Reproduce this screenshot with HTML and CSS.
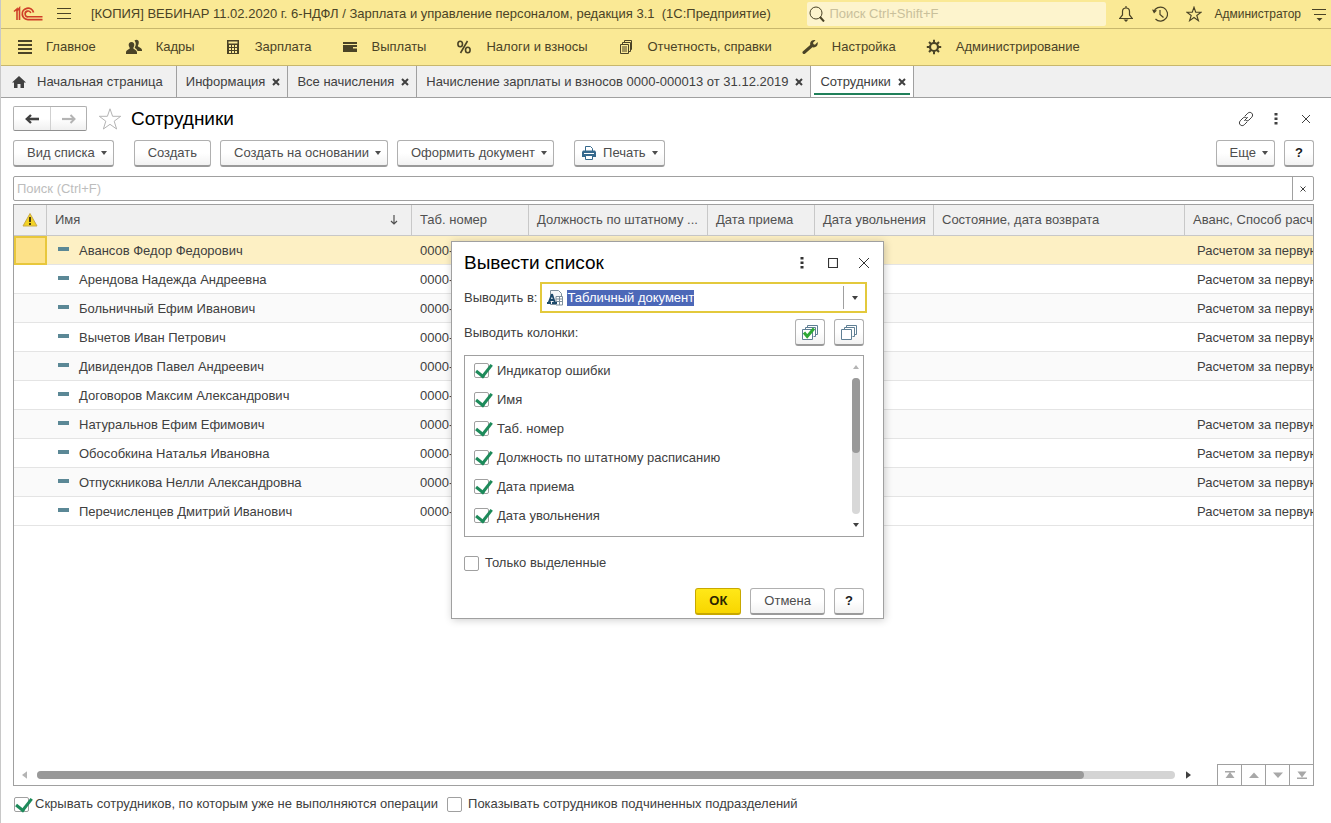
FILE: index.html
```html
<!DOCTYPE html>
<html lang="ru">
<head>
<meta charset="utf-8">
<title>Сотрудники</title>
<link rel="stylesheet" href="styles.css">
</head>
<body>
<svg class="defs" aria-hidden="true">
  <symbol id="close" viewBox="0 0 8 8"><path d="M1 1l6 6M7 1L1 7" fill="none" stroke="currentColor" stroke-width="2"/></symbol>
  <symbol id="caret" viewBox="0 0 6 4"><path d="M0 0h6L3 4z" fill="currentColor"/></symbol>
  <symbol id="dots" viewBox="0 0 4 12"><path d="M.5 0h3v2.500h-3zM.5 4.500h3v2.500h-3zM.5 9h3v2.500h-3z" fill="currentColor"/></symbol>
  <symbol id="star" viewBox="0 0 24 24"><path d="M12 1.800l2.600 7.500h8.100l-6.500 4.900 2.400 7.800L12 17.300 5.400 22l2.400-7.800L1.300 9.300h8.100z" fill="none" stroke="currentColor" stroke-linejoin="miter"/></symbol>
</svg>
<div class="app">
  <header class="titlebar">
    <svg class="logo" viewBox="0 0 30 16" fill="none" stroke="#cf3f28"><path d="M1 5.500L4 3v11M3.500 5.500L6.500 2v12" stroke-width="1.600"/><path d="M20.500 6.500A5.700 5.700 0 1 0 15.500 13.600H29.500" stroke-width="1.800"/><path d="M17.800 7A2.900 2.900 0 1 0 15.500 10.800H29.500" stroke-width="1.600"/></svg>
    <button class="plain" aria-label="Меню"><svg class="burger" viewBox="0 0 14 12"><path d="M0 .5h14M0 5.500h14M0 10.500h14" stroke="currentColor" stroke-width="1"/></svg></button>
    <h1 class="app-title">[КОПИЯ] ВЕБИНАР 11.02.2020 г. 6-НДФЛ / Зарплата и управление персоналом, редакция 3.1&nbsp; (1С:Предприятие)</h1>
    <label class="global-search">
      <svg viewBox="0 0 16 16" fill="none" stroke="currentColor"><circle cx="7" cy="7" r="6"/><path d="M11 11l4 4.500" stroke-width="2"/></svg>
      <input type="text" placeholder="Поиск Ctrl+Shift+F" aria-label="Поиск">
    </label>
    <div class="title-tools">
      <button class="plain" aria-label="Уведомления"><svg class="ic16" viewBox="0 0 16 16" fill="none" stroke="currentColor" stroke-width="1.200"><path d="M8 0v1.500M1 12.500h14M1.800 12.300L4.500 9V5.500a3.500 3.500 0 0 1 7 0V9l2.700 3.300"/><path d="M5.500 13.500h5L8 16z" fill="currentColor" stroke="none"/></svg></button>
      <button class="plain" aria-label="История"><svg class="ic16" viewBox="0 0 16 16" fill="none" stroke="currentColor"><path d="M1.800 6A7 7 0 1 1 3.500 13M8 4v4.500l3.500 3" stroke-width="1.200"/><path d="M0 3.500l5 1-3 3z" fill="currentColor" stroke="none"/></svg></button>
      <button class="plain" aria-label="Избранное"><svg class="ic16" viewBox="0 0 24 24" stroke-width="1.700"><use href="#star"/></svg></button>
      <a class="user" href="#">Администратор</a>
      <button class="plain" aria-label="Сервис"><svg class="ic16" viewBox="0 0 16 16"><path d="M1 3.500h14M3 8.500h12" stroke="currentColor"/><path d="M5.500 12h6l-3 3z" fill="currentColor"/></svg></button>
    </div>
  </header>

  <nav class="sections">
    <a href="#"><svg class="ic16" viewBox="0 0 16 16"><path d="M2 2h14M2 6h14M2 10h14M2 14h14" stroke="currentColor" stroke-width="2"/></svg>Главное</a>
    <a href="#"><svg class="ic16" viewBox="0 0 16 16" fill="currentColor"><path d="M8.500 1.500c2-1.500 4.500-.5 4.300 2-.1 2-.8 2.500-1 3.500 0 1 4 1.500 4.200 4v1h-4.500c-.3-2-2.500-2.500-2.800-3.500 1.500-2 1.500-5-.2-7z"/><path d="M5.500 3c2 0 3 1.500 2.800 3.300-.2 1.600-1 2.200-1 3 0 1 3.700 1.500 3.700 4.200V15H0v-1.500c0-2.700 3.800-3.200 3.800-4.200 0-.8-.9-1.400-1.100-3C2.500 4.500 3.500 3 5.500 3z"/></svg>Кадры</a>
    <a href="#"><svg class="ic16" viewBox="0 0 16 16"><path d="M2 1h12v14H2z" fill="currentColor"/><path d="M3.500 2.500h9v2h-9zM4 6h2v2H4zM7 6h2v2H7zM10 6h2v2h-2zM4 9h2v2H4zM7 9h2v2H7zM10 9h2v2h-2zM4 12h2v2H4zM7 12h2v2H7zM10 12h2v2h-2z" fill="#fae995"/></svg>Зарплата</a>
    <a href="#"><svg class="ic16" viewBox="0 0 16 16" fill="currentColor"><path d="M1 3h14v2H1zM1 6h14v2h-4v1.500h4V13H1z"/></svg>Выплаты</a>
    <a href="#"><svg class="ic16" viewBox="0 0 16 16" fill="none" stroke="currentColor" stroke-width="1.600"><ellipse cx="4.200" cy="5" rx="2.300" ry="2.800"/><ellipse cx="11.800" cy="11" rx="2.300" ry="2.800"/><path d="M11.500 2L4.500 14"/></svg>Налоги и взносы</a>
    <a href="#"><svg class="ic16" viewBox="0 0 16 16" fill="none" stroke="currentColor"><path d="M2.500 5.500h8v9h-8zM4.500 5.500v-2h8v9h-2M6.500 3.500v-2h7v9h-1M4 8h5M4 10h5M4 12h5"/></svg>Отчетность, справки</a>
    <a href="#"><svg class="ic16" viewBox="0 0 16 16"><path d="M2 13.500L10 6.500" stroke="currentColor" stroke-width="3" stroke-linecap="round"/><path d="M13.500 1.200L11 3.800l.5 1.500 1.500.4L15.600 3c.8 3-1.300 5.500-4 5.400C9 8.300 7.800 6 8.200 4 8.700 1.800 11 .5 13.500 1.200z" fill="currentColor"/></svg>Настройка</a>
    <a href="#"><svg class="ic16" viewBox="0 0 16 16" fill="none" stroke="currentColor"><circle cx="8" cy="8" r="4" stroke-width="2.200"/><path d="M8 .8v3M8 12.200v3M.8 8h3M12.200 8h3M3 3l2 2M11 11l2 2M13 3l-2 2M5 11l-2 2" stroke-width="2"/></svg>Администрирование</a>
  </nav>

  <nav class="tabs">
    <a class="tab home" href="#"><svg class="home-icon" viewBox="0 0 14 12" fill="currentColor"><path d="M7 0l7 6.500H12V12H8.500V8h-3v4H2V6.500H0z"/></svg>Начальная страница</a>
    <a class="tab" href="#">Информация<svg class="x8"><use href="#close"/></svg></a>
    <a class="tab" href="#">Все начисления<svg class="x8"><use href="#close"/></svg></a>
    <a class="tab" href="#">Начисление зарплаты и взносов 0000-000013 от 31.12.2019<svg class="x8"><use href="#close"/></svg></a>
    <a class="tab active" href="#">Сотрудники<svg class="x8"><use href="#close"/></svg></a>
  </nav>

  <main class="page">
    <div class="page-head">
      <div class="history">
        <button aria-label="Назад"><svg viewBox="0 0 14 10"><path d="M2 5h12" stroke="currentColor" stroke-width="2.600"/><path d="M6 1L1.800 5 6 9" fill="none" stroke="currentColor" stroke-width="2.400"/></svg></button>
        <button aria-label="Вперед" disabled><svg viewBox="0 0 14 10"><path d="M0 5h12" stroke="currentColor" stroke-width="2.200"/><path d="M8.500 1l4 4-4 4" fill="none" stroke="currentColor" stroke-width="2"/></svg></button>
      </div>
      <button class="plain fav" aria-label="В избранное"><svg viewBox="0 0 24 24"><use href="#star"/></svg></button>
      <h2 class="page-title">Сотрудники</h2>
      <div class="window-tools">
        <button class="plain" aria-label="Ссылка"><svg class="ic16" viewBox="0 0 16 16" fill="none" stroke="currentColor" stroke-linecap="round"><path d="M7 5l2.800-2.800c2.600-2.500 6.500 1 4 4L11 9c-1 1-2.500 1-3.500.2M9 11l-2.800 2.800c-2.600 2.500-6.500-1-4-4L5 7c1-1 2.500-1 3.500-.2M6.500 9.500l3-3"/></svg></button>
        <button class="plain" aria-label="Еще"><svg class="dots"><use href="#dots"/></svg></button>
        <button class="plain" aria-label="Закрыть"><svg class="x10" viewBox="0 0 10 10"><path d="M1 1l8 8M9 1L1 9" stroke="currentColor"/></svg></button>
      </div>
    </div>

    <div class="toolbar">
      <button class="btn menu">Вид списка<svg class="caret"><use href="#caret"/></svg></button>
      <div class="group">
        <button class="btn">Создать</button>
        <button class="btn menu">Создать на основании<svg class="caret"><use href="#caret"/></svg></button>
        <button class="btn menu">Оформить документ<svg class="caret"><use href="#caret"/></svg></button>
      </div>
      <button class="btn menu print"><svg class="ic16" viewBox="0 0 16 16"><path d="M4.500 6V1.500h5l2 2V6" fill="#fff" stroke="#35688c"/><path d="M2 5.500h12l1 1.500v5H1V7z" fill="#35688c"/><path d="M3 8h10v1H3z" fill="#fff"/><path d="M4.500 10.500h7v4h-7z" fill="#fff" stroke="#35688c"/></svg>Печать<svg class="caret"><use href="#caret"/></svg></button>
      <div class="group end">
        <button class="btn menu">Еще<svg class="caret"><use href="#caret"/></svg></button>
        <button class="btn help">?</button>
      </div>
    </div>

    <div class="list-search">
      <input type="text" placeholder="Поиск (Ctrl+F)" aria-label="Поиск по списку">
      <button aria-label="Очистить"><svg class="x6" viewBox="0 0 6 6"><path d="M.5 .5l5 5M5.500 .5l-5 5" stroke="currentColor"/></svg></button>
    </div>

    <section class="list">
      <div class="list-body">
        <table>
          <colgroup><col class="c-flag"><col class="c-name"><col class="c-num"><col class="c-post"><col class="c-hired"><col class="c-fired"><col class="c-state"><col></colgroup>
          <thead>
            <tr>
              <th><svg class="ic16" viewBox="0 0 16 16"><path d="M8 1.500l7 12.500H1z" fill="#f3d324" stroke="#c9a94a" stroke-linejoin="round"/><path d="M8 5v5M8 11v2" stroke="#4a3c10" stroke-width="2"/></svg></th>
              <th><span class="sorted">Имя<svg viewBox="0 0 8 10"><path d="M4 0v9M1 6l3 3 3-3" fill="none" stroke="currentColor" stroke-width="1.200"/></svg></span></th>
              <th>Таб. номер</th><th>Должность по штатному ...</th><th>Дата приема</th><th>Дата увольнения</th><th>Состояние, дата возврата</th><th class="cut">Аванс, Способ расчета</th>
            </tr>
          </thead>
          <tbody>
            <tr class="selected"><td class="mark"></td><td class="name">Авансов Федор Федорович</td><td>0000-</td><td></td><td></td><td></td><td></td><td class="pay">Расчетом за первую</td></tr>
            <tr><td></td><td class="name">Арендова Надежда Андреевна</td><td>0000-</td><td></td><td></td><td></td><td></td><td class="pay">Расчетом за первую</td></tr>
            <tr><td></td><td class="name">Больничный Ефим Иванович</td><td>0000-</td><td></td><td></td><td></td><td></td><td class="pay">Расчетом за первую</td></tr>
            <tr><td></td><td class="name">Вычетов Иван Петрович</td><td>0000-</td><td></td><td></td><td></td><td></td><td class="pay">Расчетом за первую</td></tr>
            <tr><td></td><td class="name">Дивидендов Павел Андреевич</td><td>0000-</td><td></td><td></td><td></td><td></td><td class="pay">Расчетом за первую</td></tr>
            <tr><td></td><td class="name">Договоров Максим Александрович</td><td>0000-</td><td></td><td></td><td></td><td></td><td class="pay"></td></tr>
            <tr><td></td><td class="name">Натуральнов Ефим Ефимович</td><td>0000-</td><td></td><td></td><td></td><td></td><td class="pay">Расчетом за первую</td></tr>
            <tr><td></td><td class="name">Обособкина Наталья Ивановна</td><td>0000-</td><td></td><td></td><td></td><td></td><td class="pay">Расчетом за первую</td></tr>
            <tr><td></td><td class="name">Отпускникова Нелли Александровна</td><td>0000-</td><td></td><td></td><td></td><td></td><td class="pay">Расчетом за первую</td></tr>
            <tr><td></td><td class="name">Перечисленцев Дмитрий Иванович</td><td>0000-</td><td></td><td></td><td></td><td></td><td class="pay">Расчетом за первую</td></tr>
          </tbody>
        </table>
      </div>
      <div class="list-foot">
        <svg class="arrow pale" viewBox="0 0 4 6"><path d="M4 0v6L0 3z" fill="currentColor"/></svg>
        <div class="hscroll"><div class="hthumb"></div></div>
        <svg class="arrow" viewBox="0 0 4 6"><path d="M0 0v6l4-3z" fill="currentColor"/></svg>
        <div class="pager">
          <button aria-label="В начало"><svg viewBox="0 0 10 8"><path d="M0 0h10v1.500H0zM5 1l4.500 6h-9z" fill="currentColor"/></svg></button>
          <button aria-label="Вверх"><svg viewBox="0 0 10 8"><path d="M5 1.500L10 7H0z" fill="currentColor"/></svg></button>
          <button aria-label="Вниз"><svg viewBox="0 0 10 8"><path d="M0 1.500h10L5 7z" fill="currentColor"/></svg></button>
          <button aria-label="В конец"><svg viewBox="0 0 10 8"><path d="M.5 .5h9L5 6.500zM0 6.500h10V8H0z" fill="currentColor"/></svg></button>
        </div>
      </div>
    </section>

    <div class="options">
      <label class="check"><input type="checkbox" checked>Скрывать сотрудников, по которым уже не выполняются операции</label>
      <label class="check"><input type="checkbox">Показывать сотрудников подчиненных подразделений</label>
    </div>
  </main>

  <section class="dialog" role="dialog" aria-labelledby="dialog-title">
    <div class="dialog-head">
      <h2 id="dialog-title">Вывести список</h2>
      <div class="window-tools">
        <button class="plain" aria-label="Еще"><svg class="dots"><use href="#dots"/></svg></button>
        <button class="plain" aria-label="Развернуть"><svg class="x10" viewBox="0 0 10 10"><path d="M.5 .5h9v9h-9z" fill="none" stroke="currentColor" stroke-width="1.200"/></svg></button>
        <button class="plain" aria-label="Закрыть"><svg class="x10" viewBox="0 0 10 10"><path d="M0 0l10 10M10 0L0 10" stroke="currentColor"/></svg></button>
      </div>
    </div>
    <div class="target-row">
      <label for="target">Выводить в:</label>
      <div class="combo">
        <svg class="ic16" viewBox="0 0 16 16"><path d="M3.500 .5h8l3 3v11h-11z" fill="#f4f7f9" stroke="#7d8f9c"/><path d="M9 6.500h6.500v8.500H9zM9 9h6.500M9 11.500h6.500M12.500 6.500V15" fill="#fff" stroke="#7d8f9c"/><path d="M0 13h4M5 13h5M1.500 13L5 4M5 4l3 9M3 10h3.500" fill="none" stroke="#1d4a6b" stroke-width="1.800"/></svg>
        <input id="target" type="text" value="Табличный документ">
        <button aria-label="Выбрать"><svg class="caret"><use href="#caret"/></svg></button>
      </div>
    </div>
    <div class="columns-row">
      <span>Выводить колонки:</span>
      <button class="btn icon" aria-label="Установить все"><svg class="ic16" viewBox="0 0 16 16"><path d="M5.500 3V1.500h10v9h-2M3.500 5V3.500h10v9h-2" fill="none" stroke="#5f7f94"/><path d="M.5 5.500h10v10H.5z" fill="#fff" stroke="#5f7f94"/><path d="M2 8.500l3.200 4L12 4.500" fill="none" stroke="#2ea836" stroke-width="3"/></svg></button>
      <button class="btn icon" aria-label="Снять все"><svg class="ic16" viewBox="0 0 16 16"><path d="M5.500 3V1.500h10v9h-2M3.500 5V3.500h10v9h-2" fill="none" stroke="#5f7f94"/><path d="M.5 5.500h10v10H.5z" fill="#fff" stroke="#5f7f94"/></svg></button>
    </div>
    <div class="columns">
      <div class="column-list">
        <label class="check"><input type="checkbox" checked>Индикатор ошибки</label>
        <label class="check"><input type="checkbox" checked>Имя</label>
        <label class="check"><input type="checkbox" checked>Таб. номер</label>
        <label class="check"><input type="checkbox" checked>Должность по штатному расписанию</label>
        <label class="check"><input type="checkbox" checked>Дата приема</label>
        <label class="check"><input type="checkbox" checked>Дата увольнения</label>
      </div>
      <div class="vscroll">
        <svg class="varrow pale" viewBox="0 0 6 4"><path d="M0 4h6L3 0z" fill="currentColor"/></svg>
        <div class="vtrack"><div class="vthumb"></div></div>
        <svg class="varrow"><use href="#caret"/></svg>
      </div>
    </div>
    <label class="check only"><input type="checkbox">Только выделенные</label>
    <div class="dialog-actions">
      <button class="btn primary">ОК</button>
      <button class="btn">Отмена</button>
      <button class="btn help">?</button>
    </div>
  </section>
</div>
<script src="app.js"></script>
</body>
</html>
```

FILE: styles.css
```css
* { box-sizing: border-box; }

body {
  margin: 0;
  background: #fff;
  color: #404040;
  font: 13px/16px "Liberation Sans", Arial, sans-serif;
}

button, input { font: inherit; color: inherit; }
a { color: inherit; text-decoration: none; }
h1, h2 { margin: 0; font-weight: normal; }
svg { display: block; flex: none; }
button { display: flex; align-items: center; justify-content: center; padding: 0; }

.defs { position: absolute; width: 0; height: 0; }
.plain { border: 0; background: none; }
.ic16 { width: 16px; height: 16px; }
.x8 { width: 8px; height: 8px; }
.x10 { width: 10px; height: 10px; }
.x6 { width: 6px; height: 6px; }
.dots { width: 4px; height: 12px; }
.caret { width: 6px; height: 4px; }

.app {
  position: relative;
  display: flex;
  flex-direction: column;
  min-height: 100vh;
  border-left: 1px solid #c8c8c8;
}

/* Title bar */
.titlebar {
  display: flex;
  align-items: center;
  height: 29px;
  padding: 0 4px 0 12px;
  background: #fae995;
  border-bottom: 1px solid #c8b76c;
  color: #4a4326;
}
.logo { width: 30px; height: 16px; margin-right: 14px; }
.burger { width: 14px; height: 12px; }
.app-title { flex: 1; margin-left: 20px; font-size: 13px; white-space: nowrap; }
.global-search {
  display: flex;
  align-items: center;
  gap: 4px;
  width: 299px;
  height: 24px;
  padding-left: 2px;
  background: #fdf4cd;
  border-radius: 2px;
}
.global-search svg { width: 16px; height: 16px; }
.global-search input { flex: 1; min-width: 0; padding: 0; border: 0; background: none; }
.global-search input::placeholder { color: #c9c09b; }
.title-tools { display: flex; align-items: center; gap: 18px; margin-left: 12px; }
.user { margin: 0 -8px 0 -6px; font-size: 12px; }

/* Sections */
.sections {
  display: flex;
  align-items: center;
  gap: 30px;
  height: 37px;
  padding-left: 15px;
  background: #fae995;
  border-bottom: 1px solid #c8b76c;
  color: #4a4326;
}
.sections a { display: flex; align-items: center; gap: 14px; white-space: nowrap; }

/* Open pages */
.tabs {
  display: flex;
  height: 32px;
  background: #f0f0f0;
  border-bottom: 1px solid #a0a0a0;
}
.tab {
  display: flex;
  align-items: center;
  gap: 7px;
  padding: 0 7px 0 9px;
  border-right: 1px solid #a0a0a0;
  white-space: nowrap;
}
.tab.home { gap: 11px; padding: 0 13px 0 11px; }
.home-icon { width: 14px; height: 12px; }
.tab.active {
  background:
    linear-gradient(#20805a, #20805a) center bottom 2px / calc(100% - 6px) 2px no-repeat,
    #fff;
}

/* Page */
.page { flex: 1; display: flex; flex-direction: column; padding: 8px 17px 11px 12px; }
.page-head { display: flex; align-items: center; height: 25px; }
.history {
  display: flex;
  height: 25px;
  border: 1px solid #b0b0b0;
  border-bottom-color: #909090;
  border-radius: 2px;
  background: linear-gradient(#fff 50%, #f0f0f0);
}
.history button { width: 36px; border: 0; background: none; }
.history button + button { border-left: 1px solid #d0d0d0; color: #b4b4b4; }
.history svg { width: 14px; height: 10px; }
.fav { margin: 0 9px 0 11px; color: #b4b4b4; }
.fav svg { width: 24px; height: 24px; }
.page-title { color: #000; font-size: 19px; line-height: 22px; }
.window-tools { display: flex; align-items: center; gap: 14px; margin-left: auto; }
.window-tools button { width: 16px; height: 16px; }

.toolbar { display: flex; gap: 20px; margin-top: 9px; }
.group { display: flex; gap: 9px; }
.group.end { margin-left: auto; }
.btn {
  height: 27px;
  padding: 0 13px;
  border: 1px solid #b0b0b0;
  border-bottom: 2px solid #9a9a9a;
  border-radius: 3px;
  background: linear-gradient(#fff 50%, #f2f2f2);
  color: #4d4d4d;
  white-space: nowrap;
}
.btn.menu { gap: 6px; padding-right: 6px; }
.btn.print { gap: 6px; padding-left: 6px; }
.btn.help { width: 30px; padding: 0; color: #1a1a1a; font-weight: bold; }
.btn.icon { width: 30px; padding: 0; }
.btn.primary {
  background: linear-gradient(#ffe818, #f8d600);
  border-color: #c8a800;
  color: #2b2600;
  font-weight: bold;
}

.list-search {
  display: flex;
  height: 25px;
  margin-top: 9px;
  border: 1px solid #a0a0a0;
  border-radius: 2px;
}
.list-search input { flex: 1; min-width: 0; padding: 0 3px; border: 0; background: none; }
.list-search input::placeholder { color: #bdbdbd; }
.list-search button { width: 21px; border: 0; border-left: 1px solid #a0a0a0; background: none; }

/* Employee list */
.list {
  flex: 1;
  display: flex;
  flex-direction: column;
  margin-top: 3px;
  border: 1px solid #a0a0a0;
}
.list-body { flex: 1; overflow: hidden; }
table { width: 100%; table-layout: fixed; border-collapse: separate; border-spacing: 0; }
.c-flag { width: 33px; }
.c-name { width: 365px; }
.c-num { width: 117px; }
.c-post { width: 179px; }
.c-hired { width: 107px; }
.c-fired { width: 119px; }
.c-state { width: 251px; }
th, td { overflow: hidden; padding: 0 4px 0 8px; text-align: left; white-space: nowrap; }
th {
  height: 31px;
  background: #f0f0f0;
  border-right: 1px solid #c8c8c8;
  border-bottom: 1px solid #c8c8c8;
  color: #505050;
  font-weight: normal;
  text-overflow: ellipsis;
}
th:last-child { border-right: 0; }
th.cut { padding-right: 0; text-overflow: clip; }
.sorted { display: flex; align-items: center; justify-content: space-between; padding-right: 9px; }
.sorted svg { width: 8px; height: 10px; }
td { height: 29px; padding-top: 2px; border-bottom: 1px solid #e4e4e4; }
tbody tr:nth-child(odd) { background: #fafafa; }
tbody tr.selected { background: #fdf0c4; }
td.mark { background: #fde28b; border: 2px solid #e8c73c; }
td.name { padding-left: 32px; background: linear-gradient(#5b8896, #5b8896) 11px 11px / 11px 4px no-repeat; }
td.pay { padding-left: 12px; padding-right: 0; }

.list-foot { display: flex; align-items: center; height: 21px; padding-left: 8px; }
.arrow { width: 5px; height: 8px; }
.pale { color: #b4b4b4; }
.hscroll { flex: 1; height: 8px; margin: 0 11px 0 10px; border-radius: 4px; background: #d4d4d4; }
.hthumb { width: 92%; height: 8px; border-radius: 4px; background: #999; }
.pager { display: flex; height: 21px; margin-left: 26px; border-top: 1px solid #a0a0a0; }
.pager button { width: 24px; border: 0; border-left: 1px solid #a0a0a0; background: none; color: #a8a8a8; }
.pager svg { width: 10px; height: 8px; }

.options { display: flex; gap: 9px; margin-top: 10px; padding-left: 1px; }
.check { display: flex; align-items: center; gap: 6px; white-space: nowrap; }
.check input {
  appearance: none;
  position: relative;
  flex: none;
  width: 15px;
  height: 15px;
  margin: 0;
  border: 1px solid #a0a0a0;
  border-radius: 2px;
  background: #fff;
}
.check input:checked::after {
  content: "";
  position: absolute;
  left: 4px;
  top: -3px;
  width: 7px;
  height: 13px;
  border: solid #1d8a5a;
  border-width: 0 3px 3px 0;
  transform: rotate(38deg);
}

/* Output dialog, floating over the list */
.dialog {
  position: absolute;
  left: 450px;
  top: 241px;
  width: 433px;
  padding: 9px 19px 3px 12px;
  background: #fff;
  border: 1px solid #a0a0a0;
  box-shadow: 1px 1px 8px rgba(0, 0, 0, 0.2);
}
.dialog-head { display: flex; align-items: center; height: 24px; margin-right: -8px; color: #333; }
.dialog-head h2 { color: #000; font-size: 19px; line-height: 22px; }
.dialog-head .window-tools { gap: 15px; }
.target-row { display: flex; align-items: center; gap: 3px; height: 31px; margin: 7px -3px 0 0; }
.target-row label { flex: none; }
.combo { flex: 1; display: flex; align-items: center; height: 31px; padding-left: 5px; border: 2px solid #e3c93c; }
.combo input { flex: 1; min-width: 0; margin-left: 4px; padding: 0; border: 0; outline: 0; }
.combo input::selection { background: #4c68b8; color: #fff; }
.combo button { width: 22px; height: 23px; border: 0; border-left: 1px solid #a0a0a0; background: none; }
.columns-row { display: flex; align-items: center; gap: 9px; margin-top: 6px; }
.columns-row span { flex: 1; }
.columns { display: flex; margin-top: 9px; padding: 0 2px 0 9px; border: 1px solid #a0a0a0; }
.column-list { flex: 1; padding-bottom: 6px; }
.column-list .check { height: 29px; gap: 8px; }
.vscroll { display: flex; flex-direction: column; align-items: center; gap: 9px; width: 10px; padding: 9px 0; }
.varrow { width: 6px; height: 4px; }
.vtrack { flex: 1; width: 8px; border-radius: 4px; background: #d8d8d8; }
.vthumb { width: 8px; height: 55%; border-radius: 4px; background: #999; }
.only { margin-top: 18px; }
.dialog-actions { display: flex; justify-content: flex-end; gap: 9px; margin-top: 17px; }
```

FILE: app.js
```js
const target = document.getElementById("target");
target.focus();
target.select();
```
